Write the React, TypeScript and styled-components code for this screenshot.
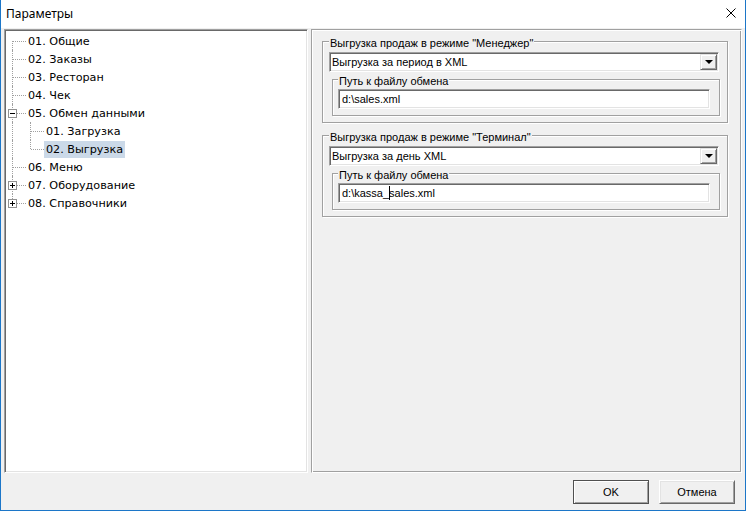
import React from "react";
import styled, { createGlobalStyle } from "styled-components";

const GlobalStyle = createGlobalStyle`
  html, body {
    margin: 0;
    padding: 0;
    background: #ffffff;
  }
  * {
    box-sizing: border-box;
  }
`;

const Window = styled.div`
  width: 746px;
  height: 511px;
  display: flex;
  flex-direction: column;
  background: #f0f0f0;
  border: 1px solid #1c76c8;
  border-top: none;
  font-family: "Liberation Sans", Arial, sans-serif;
  font-size: 11px;
  color: #000;
  overflow: hidden;
`;

const TitleBar = styled.div`
  height: 28px;
  flex: none;
  display: flex;
  align-items: center;
  justify-content: space-between;
  background: #ffffff;
  padding: 0 9px 2px 5px;
  font-family: "Noto Sans", "Liberation Sans", sans-serif;
  font-size: 12px;
`;

const Main = styled.div`
  flex: none;
  height: 445px;
  display: flex;
  gap: 3px;
  padding: 1px 3px 0 3px;
`;

const TreePanel = styled.div`
  width: 304px;
  background: #ffffff;
  border: 1px solid;
  border-color: #a0a0a0 #ffffff #ffffff #a0a0a0;
  box-shadow: inset 1px 1px 0 #696969, inset -1px -1px 0 #e3e3e3;
  padding: 2px 0 0 3px;
  font-family: "DejaVu Sans", Tahoma, sans-serif;
  font-size: 11.2px;
`;

const TreeRow = styled.div`
  display: flex;
  align-items: center;
  height: 18px;
`;

type CellKind = "first" | "mid" | "last" | "pipe";

const Cell = styled.div<{ $kind: CellKind }>`
  position: relative;
  width: 18px;
  height: 18px;
  flex: none;

  &::before {
    content: "";
    position: absolute;
    left: 4px;
    width: 0;
    border-left: 1px dotted #a0a0a0;
    top: ${(p) => (p.$kind === "first" ? "9px" : "0")};
    bottom: ${(p) => (p.$kind === "last" ? "9px" : "0")};
  }

  &::after {
    content: "";
    position: absolute;
    left: 5px;
    top: 9px;
    width: 13px;
    height: 0;
    border-top: 1px dotted #a0a0a0;
    display: ${(p) => (p.$kind === "pipe" ? "none" : "block")};
  }
`;

const Expander = styled.span<{ $open: boolean }>`
  position: absolute;
  left: 0;
  top: 5px;
  width: 9px;
  height: 9px;
  background: #ffffff;
  border: 1px solid #919191;
  z-index: 1;

  &::before {
    content: "";
    position: absolute;
    left: 1px;
    top: 3px;
    width: 5px;
    height: 1px;
    background: #000;
  }

  &::after {
    content: "";
    position: absolute;
    left: 3px;
    top: 1px;
    width: 1px;
    height: 5px;
    background: #000;
    display: ${(p) => (p.$open ? "none" : "block")};
  }
`;

const NodeLabel = styled.span<{ $selected?: boolean }>`
  height: 17px;
  line-height: 17px;
  padding: 0 2px;
  white-space: nowrap;
  background: ${(p) => (p.$selected ? "#cbd9e8" : "transparent")};
`;

const SettingsPanel = styled.div`
  width: 431px;
  background: #f0f0f0;
  border: 1px solid;
  border-color: #a0a0a0 #ffffff #ffffff #a0a0a0;
  box-shadow: inset 1px 1px 0 #ffffff, inset -1px -1px 0 #a0a0a0;
  padding: 11px 13px 0 10px;
`;

const Group = styled.div<{ $inner?: boolean }>`
  border: 1px solid #a0a0a0;
  box-shadow: 1px 1px 0 #ffffff, inset 1px 1px 0 #ffffff;
  margin: ${(p) => (p.$inner ? "7px 7px 0 9px" : "0 0 12px 0")};
  padding-bottom: 6px;
`;

const GroupLabel = styled.div<{ $inner?: boolean }>`
  width: fit-content;
  margin: -6px 0 0 ${(p) => (p.$inner ? "5px" : "6px")};
  padding: 0 1px;
  line-height: 14px;
  background: #f0f0f0;
  white-space: nowrap;
`;

const Sunken = styled.div`
  height: 20px;
  background: #ffffff;
  border: 1px solid;
  border-color: #a0a0a0 #ffffff #ffffff #a0a0a0;
  box-shadow: inset 1px 1px 0 #696969, inset -1px -1px 0 #e3e3e3;
  display: flex;
  align-items: center;
  white-space: nowrap;
`;

const Combo = styled(Sunken)`
  margin: 2px 8px 0 6px;
  padding: 1px 1px 1px 2px;
  align-items: stretch;
`;

const ComboText = styled.span`
  flex: 1;
  display: flex;
  align-items: center;
`;

const DropButton = styled.span`
  width: 17px;
  flex: none;
  background: #f0f0f0;
  border: 1px solid;
  border-color: #e3e3e3 #696969 #696969 #e3e3e3;
  box-shadow: inset 1px 1px 0 #ffffff, inset -1px -1px 0 #a0a0a0;
  display: flex;
  align-items: center;
  justify-content: center;

  &::after {
    content: "";
    width: 0;
    height: 0;
    border-left: 4px solid transparent;
    border-right: 4px solid transparent;
    border-top: 4px solid #000;
  }
`;

const PathInput = styled(Sunken)`
  margin: 1px 9px 0 5px;
  padding-left: 3px;
`;

const Caret = styled.span`
  display: inline-block;
  width: 1px;
  height: 14px;
  margin-right: -1px;
  background: #000;
`;

const Footer = styled.div`
  flex: 1;
  display: flex;
  justify-content: flex-end;
  align-items: flex-start;
  gap: 10px;
  padding: 7px 10px 0 0;
`;

const DialogButton = styled.button<{ $default?: boolean }>`
  width: 76px;
  height: 24px;
  padding: 0;
  font-family: "Liberation Sans", Arial, sans-serif;
  font-size: 11px;
  color: #000;
  background: #f0f0f0;
  border: 1px solid;
  border-color: ${(p) =>
    p.$default ? "#505050" : "#ffffff #696969 #696969 #ffffff"};
  box-shadow: ${(p) =>
    p.$default
      ? "inset 1px 1px 0 #ffffff, inset -1px -1px 0 #a0a0a0"
      : "inset 1px 1px 0 #e3e3e3, inset -1px -1px 0 #a0a0a0"};
`;

type Node = {
  cells: CellKind[];
  label: string;
  expander?: "open" | "closed";
  selected?: boolean;
};

const nodes: Node[] = [
  { cells: ["first"], label: "01. Общие" },
  { cells: ["mid"], label: "02. Заказы" },
  { cells: ["mid"], label: "03. Ресторан" },
  { cells: ["mid"], label: "04. Чек" },
  { cells: ["mid"], label: "05. Обмен данными", expander: "open" },
  { cells: ["pipe", "mid"], label: "01. Загрузка" },
  { cells: ["pipe", "last"], label: "02. Выгрузка", selected: true },
  { cells: ["mid"], label: "06. Меню" },
  { cells: ["mid"], label: "07. Оборудование", expander: "closed" },
  { cells: ["last"], label: "08. Справочники", expander: "closed" },
];

const ExportGroup = ({
  title,
  mode,
  path,
}: {
  title: string;
  mode: string;
  path: React.ReactNode;
}) => (
  <Group>
    <GroupLabel>{title}</GroupLabel>
    <Combo>
      <ComboText>{mode}</ComboText>
      <DropButton />
    </Combo>
    <Group $inner>
      <GroupLabel $inner>Путь к файлу обмена</GroupLabel>
      <PathInput>{path}</PathInput>
    </Group>
  </Group>
);

export default function App() {
  return (
    <>
      <GlobalStyle />
      <Window>
        <TitleBar>
          <span>Параметры</span>
          <svg width="10" height="10" viewBox="0 0 10 10">
            <path d="M0.5 0.5 L9.5 9.5 M9.5 0.5 L0.5 9.5" stroke="#000" strokeWidth="1" />
          </svg>
        </TitleBar>
        <Main>
          <TreePanel>
            {nodes.map((n) => (
              <TreeRow key={n.label}>
                {n.cells.map((kind, i) => (
                  <Cell key={i} $kind={kind}>
                    {i === n.cells.length - 1 && n.expander && (
                      <Expander $open={n.expander === "open"} />
                    )}
                  </Cell>
                ))}
                <NodeLabel $selected={n.selected}>{n.label}</NodeLabel>
              </TreeRow>
            ))}
          </TreePanel>
          <SettingsPanel>
            <ExportGroup
              title={'Выгрузка продаж в режиме "Менеджер"'}
              mode="Выгрузка за период в XML"
              path="d:\sales.xml"
            />
            <ExportGroup
              title={'Выгрузка продаж в режиме "Терминал"'}
              mode="Выгрузка за день XML"
              path={
                <>
                  d:\kassa_<Caret />sales.xml
                </>
              }
            />
          </SettingsPanel>
        </Main>
        <Footer>
          <DialogButton $default>OK</DialogButton>
          <DialogButton>Отмена</DialogButton>
        </Footer>
      </Window>
    </>
  );
}
